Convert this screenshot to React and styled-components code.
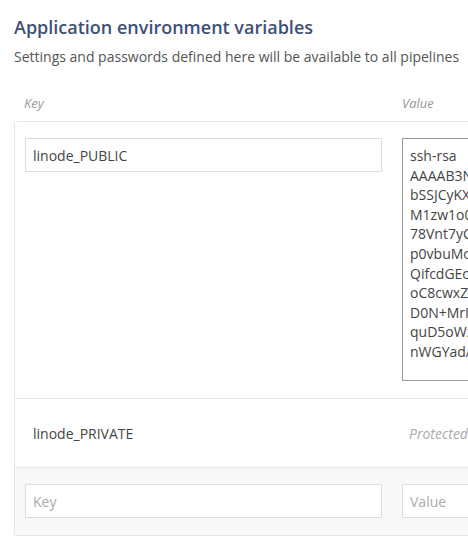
import React from "react";
import styled, { createGlobalStyle } from "styled-components";

const GlobalStyle = createGlobalStyle`
  body {
    margin: 0;
    padding: 0;
    background: #fff;
    font-family: "Open Sans", "DejaVu Sans", sans-serif;
    overflow: hidden;
  }
`;

const sshKey = [
  "ssh-rsa",
  "AAAAB3NzaC1yc2EAAAADAQABAAABAQC7",
  "bSSJCyKXq9v2hG4mTz0eW1kP8fLr3sN",
  "M1zw1o0YtRb5uJx7cVd2nHq6aLp9gE",
  "78Vnt7yCkQ4wFs1mZr8oPj3bUe0tXh",
  "p0vbuMcR2yHn5kLw9qTs7dVa1fGe",
  "QifcdGEcW3zXo8pNt6rMb4jKy2uSl",
  "oC8cwxZfT1hVq5nDe9rLg3kAy7bPw",
  "D0N+MrIuY6sJc2xWo8tFv4mRq1zHe",
  "quD5oWzNk3bTy7gPa0fLs9hXr2vCd",
  "nWGYadAk4mQe8tVz1uRo5sJb",
].join("\n");

const Page = styled.div`
  width: 760px;
  padding: 10px 14px 0;
`;

const Title = styled.h2`
  margin: 0;
  font-size: 18px;
  font-weight: 600;
  color: #3e4f77;
  line-height: 34px;
`;

const Subtitle = styled.p`
  margin: 2px 0 0;
  font-size: 14px;
  color: #555;
  line-height: 22px;
`;

const Table = styled.div`
  margin-top: 17px;
`;

const HeaderRow = styled.div`
  display: grid;
  grid-template-columns: 378px 1fr;
  height: 36px;
  align-items: center;
`;

const HeaderCell = styled.div`
  padding: 0 10px;
  font-size: 13px;
  font-style: italic;
  color: #999;
`;

const Box = styled.div`
  border: 1px solid #e6e6e6;
  border-radius: 3px;
  overflow: hidden;
`;

const Row = styled.div`
  display: grid;
  grid-template-columns: 377px 1fr;
  align-items: ${(p) => (p.$center ? "center" : "start")};
  min-height: ${(p) => (p.$center ? "68px" : "auto")};
  padding: ${(p) => (p.$center ? "0" : "16px 0 17px")};
  background: ${(p) => (p.$muted ? "#f8f8f8" : "#fff")};
  & + & {
    border-top: 1px solid #e6e6e6;
  }
`;

const Cell = styled.div`
  padding: 0 10px;
`;

const Input = styled.input`
  box-sizing: border-box;
  width: 357px;
  height: 34px;
  border: 1px solid #ddd;
  border-radius: 0;
  background: #fff;
  padding: 0 7px;
  font-family: inherit;
  font-size: 14px;
  color: #444;
  outline: none;
  &::placeholder {
    color: #aaa;
  }
`;

const TextArea = styled.textarea`
  box-sizing: border-box;
  display: block;
  width: 300px;
  height: 243px;
  border: 1px solid #999;
  border-radius: 0;
  padding: 7px 7px;
  font-family: inherit;
  font-size: 14px;
  line-height: 19.6px;
  color: #444;
  resize: none;
  white-space: pre;
  overflow: hidden;
  outline: none;
`;

const PlainText = styled.div`
  padding-left: 8px;
  font-size: 14px;
  color: #444;
`;

const Protected = styled.div`
  padding-left: 7px;
  font-size: 14px;
  font-style: italic;
  color: #aaa;
`;

export default function App() {
  return (
    <>
      <GlobalStyle />
      <Page>
        <Title>Application environment variables</Title>
        <Subtitle>
          Settings and passwords defined here will be available to all pipelines
        </Subtitle>
        <Table>
          <HeaderRow>
            <HeaderCell>Key</HeaderCell>
            <HeaderCell>Value</HeaderCell>
          </HeaderRow>
          <Box>
            <Row>
              <Cell>
                <Input defaultValue="linode_PUBLIC" />
              </Cell>
              <Cell>
                <TextArea defaultValue={sshKey} />
              </Cell>
            </Row>
            <Row $center>
              <Cell>
                <PlainText>linode_PRIVATE</PlainText>
              </Cell>
              <Cell>
                <Protected>Protected</Protected>
              </Cell>
            </Row>
            <Row $muted>
              <Cell>
                <Input placeholder="Key" />
              </Cell>
              <Cell>
                <Input placeholder="Value" />
              </Cell>
            </Row>
          </Box>
        </Table>
      </Page>
    </>
  );
}
